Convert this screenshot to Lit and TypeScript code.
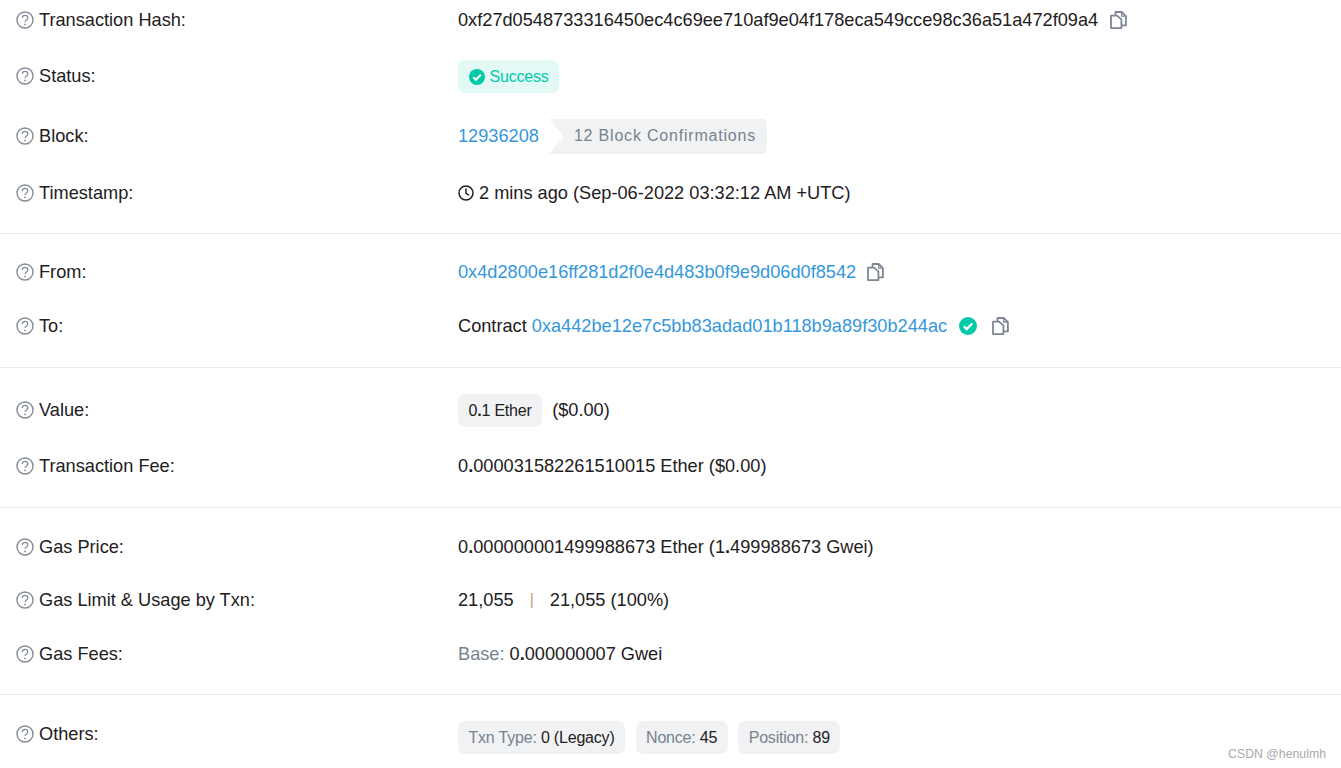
import { LitElement, html, css, svg } from "lit";
import { customElement } from "lit/decorators.js";

const q = svg`<svg class="q" viewBox="0 0 18 18" width="18" height="18"><circle cx="9" cy="9" r="8" fill="none" stroke="#858c98" stroke-width="1.4"/><path d="M6.3 7c0-1.6 1.2-2.6 2.8-2.6s2.7 1 2.7 2.4c0 1.1-.6 1.7-1.4 2.2-.8.5-1.3 1-1.3 2" fill="none" stroke="#858c98" stroke-width="1.3"/><circle cx="9" cy="13.4" r=".9" fill="#858c98"/></svg>`;
const copySvg = (cls: string) => svg`<svg class=${cls} viewBox="0 0 17 18" width="17" height="18"><path d="M5.5 4.2V1h6.2l4.2 4.2v9.2h-4.4" fill="none" stroke="#7d8793" stroke-width="1.8" stroke-linejoin="round"/><path d="M1 4.6h6l4.4 3.8v8.7H1z" fill="none" stroke="#7d8793" stroke-width="1.8" stroke-linejoin="round"/><path d="M11.6 1v4.2h4.2" fill="none" stroke="#7d8793" stroke-width="1.2"/></svg>`;
const check = (s: number, cls: string) => svg`<svg class=${cls} viewBox="0 0 18 18" width=${s} height=${s}><circle cx="9" cy="9" r="9" fill="#00c9a7"/><path d="M4.8 9.3l2.9 2.8 5.6-5.6" fill="none" stroke="#fff" stroke-width="2.3"/></svg>`;
const clock = svg`<svg class="clock" viewBox="0 0 16 16" width="16" height="16"><circle cx="8" cy="8" r="7" fill="none" stroke="#1e2022" stroke-width="1.5"/><path d="M8 3.6V8.4l3 1.8" fill="none" stroke="#1e2022" stroke-width="1.5"/></svg>`;
const dot = html`<b>.</b>`;

@customElement("app-root")
export class AppRoot extends LitElement {
  static styles = css`
    :host { display: block; position: relative; height: 768px; overflow: hidden; background: #fff; font-family: "Liberation Sans", Arial, sans-serif; font-size: 18.2px; color: #1e2022; }
    .section { padding: 26px 0 29px 16px; border-bottom: 1px solid #e9ebef; }
    .section.first { padding-top: 8px; padding-bottom: 28px; }
    .section.gas { padding-top: 27px; padding-bottom: 28px; }
    .section.last { border-bottom: 0; }
    .row { display: grid; grid-template-columns: 442px 1fr; align-items: center; min-height: 24px; margin-top: 29px; }
    .row:first-child { margin-top: 0; }
    .row.after-badge { margin-top: 26px; }
    .row.wide { margin-top: 30px; }
    .row.shifted { margin-top: 27px; }
    .row.lead { margin-top: 28px; }
    .row.top { align-items: start; }
    .row.top .label { margin-top: 1px; }
    .row.raised .label { margin-bottom: 1px; }
    .label { display: flex; align-items: center; gap: 5px; line-height: 24px; }
    .value { display: flex; align-items: center; line-height: 24px; white-space: pre; }
    .q { flex: none; }
    .copy { margin-left: 11px; }
    .copy-hash { margin-left: 12px; }
    a { color: #3498db; text-decoration: none; }
    b { font-weight: 700; }
    .muted { color: #77838f; }
    .badge { display: inline-flex; align-items: center; height: 33px; padding: 0 10.5px; border-radius: 7px; background: #f1f2f4; font-size: 16px; letter-spacing: -.2px; }
    .success { background: #e2f9f5; color: #00c9a7; gap: 5px; }
    .block-link { margin: 0 10px 1px 0; }
    .confirm { height: 35px; box-sizing: border-box; display: inline-flex; align-items: center; padding: 0 11px 2px 25px; background: #f1f2f4; color: #77838f; font-size: 16px; letter-spacing: .8px; border-radius: 0 5px 5px 0; clip-path: polygon(0 0, 100% 0, 100% 100%, 0 100%, 15px 50%); }
    .clock { margin-right: 5px; }
    .gapped { margin: 0 0 1px 10px; }
    .sep { color: #c79f7d; margin: 0 16px; font-size: 16px; }
    .pills { display: flex; gap: 10.5px; }
    .verified { margin: 0 4px 0 12px; }
    .mark { position: absolute; right: 15px; bottom: 7px; font-size: 12.3px; color: #aaa; }
  `;

  private label(t: string) {
    return html`<div class="label">${q}<span>${t}</span></div>`;
  }

  render() {
    return html`
      <div class="section first">
        <div class="row">${this.label("Transaction Hash:")}<div class="value">0xf27d0548733316450ec4c69ee710af9e04f178eca549cce98c36a51a472f09a4${copySvg("copy-hash")}</div></div>
        <div class="row raised lead">${this.label("Status:")}<div class="value"><span class="badge success">${check(16, "ok")}Success</span></div></div>
        <div class="row raised after-badge">${this.label("Block:")}<div class="value"><a class="block-link">12936208</a><span class="confirm">12 Block Confirmations</span></div></div>
        <div class="row shifted">${this.label("Timestamp:")}<div class="value">${clock}2 mins ago (Sep-06-2022 03:32:12 AM +UTC)</div></div>
      </div>
      <div class="section">
        <div class="row">${this.label("From:")}<div class="value"><a>0x4d2800e16ff281d2f0e4d483b0f9e9d06d0f8542</a>${copySvg("copy")}</div></div>
        <div class="row wide">${this.label("To:")}<div class="value">Contract <a>0xa442be12e7c5bb83adad01b118b9a89f30b244ac</a>${check(18, "verified")}${copySvg("copy")}</div></div>
      </div>
      <div class="section">
        <div class="row raised">${this.label("Value:")}<div class="value"><span class="badge">0${dot}1 Ether</span><span class="gapped">($0.00)</span></div></div>
        <div class="row shifted">${this.label("Transaction Fee:")}<div class="value">0${dot}000031582261510015 Ether ($0.00)</div></div>
      </div>
      <div class="section gas">
        <div class="row">${this.label("Gas Price:")}<div class="value">0${dot}000000001499988673 Ether (1${dot}499988673 Gwei)</div></div>
        <div class="row">${this.label("Gas Limit & Usage by Txn:")}<div class="value">21,055<span class="sep">|</span>21,055 (100%)</div></div>
        <div class="row wide">${this.label("Gas Fees:")}<div class="value"><span class="muted">Base: </span>0${dot}000000007 Gwei</div></div>
      </div>
      <div class="section last">
        <div class="row top">${this.label("Others:")}<div class="value pills">
          <span class="badge"><span class="muted">Txn Type: </span>0 (Legacy)</span>
          <span class="badge"><span class="muted">Nonce: </span>45</span>
          <span class="badge"><span class="muted">Position: </span>89</span>
        </div></div>
      </div>
      <div class="mark">CSDN @henulmh</div>
    `;
  }
}
